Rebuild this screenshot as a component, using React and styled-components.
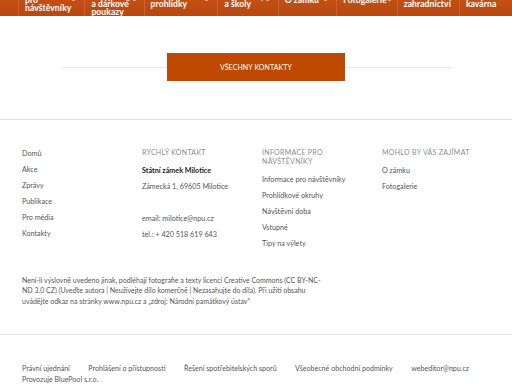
import React from "react";
import styled, { createGlobalStyle } from "styled-components";

const GlobalStyle = createGlobalStyle`
  html, body { margin: 0; padding: 0; background: #fff; }
  body { font-family: Lato, "Liberation Sans", sans-serif; color: #555; }
  * { box-sizing: border-box; }
`;

const Page = styled.div`
  width: 512px;
  min-height: 384px;
  overflow: hidden;
`;

const Nav = styled.nav`
  height: 16px;
  overflow: hidden;
  display: flex;
  align-items: flex-start;
  padding-left: 18px;
  background-color: #bd4b12;
  background-image: linear-gradient(180deg, #c24f14 0%, #b9480f 100%);
`;

const NavItem = styled.div`
  flex: 0 0 ${(p) => p.$w || 58.5}px;
  height: 32px;
  margin-top: -16px;
  border-left: 1px solid rgba(255, 255, 255, 0.14);
  padding: 0 ${(p) => p.$pr ?? 8}px 0 6px;
  display: flex;
  align-items: center;
  color: #fff;
`;

const NavLabel = styled.span`
  font-size: 8.6px;
  font-weight: 700;
  line-height: 8px;
  white-space: nowrap;
  letter-spacing: 0.05px;
`;

const Chevron = styled.svg`
  margin-left: auto;
  flex: 0 0 auto;
`;

const ButtonRow = styled.div`
  width: 389px;
  margin: 37px auto 0;
  display: flex;
  align-items: center;
`;

const Rule = styled.div`
  flex: 1;
  height: 1px;
  background: #e6e6e6;
`;

const MainButton = styled.a`
  flex: 0 0 178px;
  height: 28px;
  background: #bf4900;
  color: #fff;
  display: flex;
  align-items: center;
  justify-content: center;
  font-size: 7px;
  letter-spacing: 0.1px;
  text-transform: uppercase;
  text-decoration: none;
`;

const Footer = styled.footer`
  margin-top: 38px;
  border-top: 1px solid #dedede;
  padding: 28px 0 0 22px;
`;

const Columns = styled.div`
  display: grid;
  grid-template-columns: repeat(4, 120px);
  align-items: start;
`;

const Column = styled.div`
  display: flex;
  flex-direction: column;
  margin-top: ${(p) => p.$mt || 0}px;
`;

const Heading = styled.div`
  font-size: 7px;
  line-height: 9px;
  color: #8c8c8c;
  text-transform: uppercase;
  letter-spacing: 0.3px;
  margin-bottom: 5.5px;
`;

const Item = styled.div`
  font-size: 7.2px;
  line-height: 16px;
  height: 16px;
  color: ${(p) => (p.$strong ? "#222" : "#555")};
  font-weight: ${(p) => (p.$strong ? 700 : 400)};
  white-space: nowrap;
`;

const License = styled.p`
  margin: 23px 0 0;
  font-size: 7px;
  line-height: 10.8px;
  color: #555;
  white-space: nowrap;
`;

const BottomBar = styled.div`
  margin-top: 27px;
  border-top: 1px solid #e4e4e4;
  padding: 28px 0 8px 22px;
`;

const BottomLinks = styled.div`
  display: flex;
  gap: 18.5px;
  font-size: 7.1px;
  line-height: 11px;
  color: #555;
  white-space: nowrap;
`;

const Operator = styled.div`
  font-size: 7.1px;
  line-height: 11px;
  color: #555;
`;

const ChevronIcon = () => (
  <Chevron width="5" height="4" viewBox="0 0 5 4">
    <path d="M0.5 0.8 L2.5 3 L4.5 0.8" fill="none" stroke="#fff" strokeWidth="0.9" />
  </Chevron>
);

const navItems = [
  { lines: ["Informace", "pro", "návštěvníky"], chev: true, pr: 8 },
  { lines: ["Vstupné,", "vstupenky", "a dárkové", "poukazy"], chev: true, pr: 7 },
  { lines: ["Komentované", "prohlídky"], chev: true, pr: 8 },
  { lines: ["Pro rodiny", "a školy"], chev: true, pr: 8 },
  { lines: ["O zámku"], chev: true, pr: 8 },
  { lines: ["Fotogalerie"], chev: true, pr: 5 },
  { lines: ["Zámecké", "zahradnictví"] },
  { lines: ["Zámecká", "kavárna"] },
];

export default function App() {
  return (
    <Page>
      <GlobalStyle />
      <Nav>
        {navItems.map((it, i) => (
          <NavItem key={i} $pr={it.pr}>
            <NavLabel>
              {it.lines.map((l, j) => (
                <React.Fragment key={j}>
                  {j > 0 && <br />}
                  {l}
                </React.Fragment>
              ))}
            </NavLabel>
            {it.chev && <ChevronIcon />}
          </NavItem>
        ))}
        <NavItem $w={30} />
      </Nav>

      <ButtonRow>
        <Rule />
        <MainButton href="#">Všechny kontakty</MainButton>
        <Rule />
      </ButtonRow>

      <Footer>
        <Columns>
          <Column $mt={-2.5}>
            <Item>Domů</Item>
            <Item>Akce</Item>
            <Item>Zprávy</Item>
            <Item>Publikace</Item>
            <Item>Pro média</Item>
            <Item>Kontakty</Item>
          </Column>
          <Column>
            <Heading>Rychlý kontakt</Heading>
            <Item $strong>Státní zámek Milotice</Item>
            <Item>Zámecká 1, 69605 Milotice</Item>
            <Item />
            <Item>email: milotice@npu.cz</Item>
            <Item>tel.: + 420 518 619 643</Item>
          </Column>
          <Column>
            <Heading>
              Informace pro
              <br />
              návštěvníky
            </Heading>
            <Item>Informace pro návštěvníky</Item>
            <Item>Prohlídkové okruhy</Item>
            <Item>Návštěvní doba</Item>
            <Item>Vstupné</Item>
            <Item>Tipy na výlety</Item>
          </Column>
          <Column>
            <Heading>Mohlo by vás zajímat</Heading>
            <Item>O zámku</Item>
            <Item>Fotogalerie</Item>
          </Column>
        </Columns>
        <License>
          Není-li výslovně uvedeno jinak, podléhají fotografie a texty licenci Creative Commons (CC BY-NC-
          <br />
          ND 3.0 CZ) (Uveďte autora | Neužívejte dílo komerčně | Nezasahujte do díla). Při užití obsahu
          <br />
          uvádějte odkaz na stránky www.npu.cz a „zdroj: Národní památkový ústav“
        </License>
      </Footer>

      <BottomBar>
        <BottomLinks>
          <span>Právní ujednání</span>
          <span>Prohlášení o přístupnosti</span>
          <span>Řešení spotřebitelských sporů</span>
          <span>Všeobecné obchodní podmínky</span>
          <span>webeditor@npu.cz</span>
        </BottomLinks>
        <Operator>Provozuje BluePool s.r.o.</Operator>
      </BottomBar>
    </Page>
  );
}
